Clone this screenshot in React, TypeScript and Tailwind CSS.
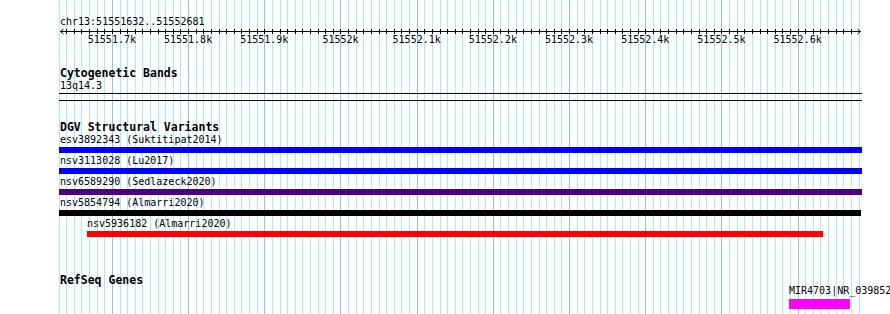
const START = 51551632
const END = 51552681
const LEFT = 60.1
const SCALE = 800 / (END - START + 1)

const xOf = (bp: number) => LEFT + (bp - START) * SCALE

const gridPositions: { x: number; major: boolean }[] = []
for (let bp = 51551630; bp <= 51552680; bp += 10) {
  gridPositions.push({ x: Math.round(xOf(bp)) + 0.5, major: bp % 100 === 0 })
}

const majorLabels = [
  { bp: 51551700, label: '51551.7k' },
  { bp: 51551800, label: '51551.8k' },
  { bp: 51551900, label: '51551.9k' },
  { bp: 51552000, label: '51552k' },
  { bp: 51552100, label: '51552.1k' },
  { bp: 51552200, label: '51552.2k' },
  { bp: 51552300, label: '51552.3k' },
  { bp: 51552400, label: '51552.4k' },
  { bp: 51552500, label: '51552.5k' },
  { bp: 51552600, label: '51552.6k' }
]

const variants = [
  { name: 'esv3892343 (Suktitipat2014)', left: 59, width: 803, color: 'bg-[#0000ff]' },
  { name: 'nsv3113028 (Lu2017)', left: 59, width: 803, color: 'bg-[#0000ff]' },
  { name: 'nsv6589290 (Sedlazeck2020)', left: 59, width: 803, color: 'bg-[#4b0082]' },
  { name: 'nsv5854794 (Almarri2020)', left: 59, width: 802, color: 'bg-black' },
  { name: 'nsv5936182 (Almarri2020)', left: 87, width: 736, color: 'bg-[#ff0000]' }
]

const Grid = () => (
  <svg className="absolute inset-0" width="890" height="314" shapeRendering="crispEdges">
    {gridPositions.map((g) => (
      <line
        key={g.x}
        x1={g.x}
        x2={g.x}
        y1={0}
        y2={314}
        stroke={g.major ? '#86c6ea' : '#a6ecf0'}
        strokeWidth={1}
      />
    ))}
  </svg>
)

const Ruler = () => (
  <svg className="block" width="890" height="18">
    <g shapeRendering="crispEdges" stroke="#000" strokeWidth={1}>
      <line x1={60} x2={861} y1={3.5} y2={3.5} />
      {gridPositions.slice(1, -1).map((g) => (
        <line key={g.x} x1={g.x} x2={g.x} y1={1} y2={6} />
      ))}
    </g>
    <polyline points="63.5,1 60.5,3.5 63.5,6" fill="none" stroke="#000" strokeWidth={1} />
    <polyline points="857.5,1 860.5,3.5 857.5,6" fill="none" stroke="#000" strokeWidth={1} />
    {majorLabels.map((m) => (
      <text
        key={m.bp}
        x={xOf(m.bp)}
        y={15}
        textAnchor="middle"
        fontFamily="'DejaVu Sans Mono', monospace"
        fontSize={10}
        fill="#000"
      >
        {m.label}
      </text>
    ))}
  </svg>
)

export default function App() {
  return (
    <div className="relative h-[314px] w-[890px] overflow-hidden bg-white font-['DejaVu_Sans_Mono',monospace] text-[10px] leading-[12px] text-black">
      <Grid />
      <div className="relative">
        <div className="pl-[60px] pt-[16px]">chr13:51551632..51552681</div>
        <Ruler />

        <h2 className="mt-[21px] pl-[60px] text-[11.5px] font-bold leading-[13px]">Cytogenetic Bands</h2>
        <div className="pl-[60px]">13q14.3</div>
        <div className="ml-[59px] mt-[1px] h-[8px] w-[803px] border-y border-black" />

        <h2 className="mt-[20px] pl-[60px] text-[11.5px] font-bold leading-[13px]">DGV Structural Variants</h2>
        {variants.map((v) => (
          <div key={v.name} className="pb-[2px]">
            <div className="whitespace-nowrap" style={{ paddingLeft: v.left === 59 ? 60 : v.left }}>
              {v.name}
            </div>
            <div className={`mt-[1px] h-[6px] ${v.color}`} style={{ marginLeft: v.left, width: v.width }} />
          </div>
        ))}

        <h2 className="mt-[35px] pl-[60px] text-[11.5px] font-bold leading-[13px]">RefSeq Genes</h2>
        <div className="-mt-[2px] pl-[789px] whitespace-nowrap">MIR4703|NR_039852</div>
        <div className="ml-[789px] mt-[2px] h-[10px] w-[61px] bg-[#ff00ff]" />
      </div>
    </div>
  )
}
